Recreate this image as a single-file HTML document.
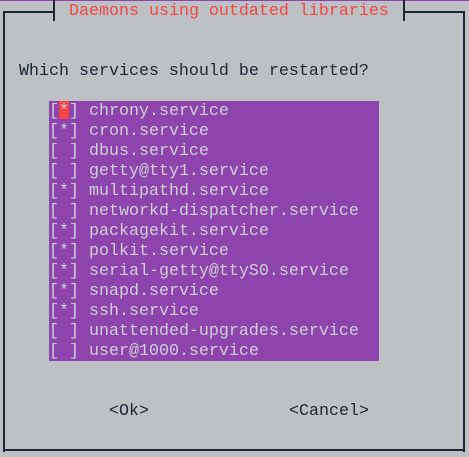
<!DOCTYPE html>
<html><head><meta charset="utf-8"><style>
html,body{margin:0;padding:0;}
body{width:469px;height:457px;background:#bdc1c4;position:relative;overflow:hidden;font-family:"Liberation Mono","DejaVu Sans Mono",monospace;font-size:16.67px;}
.a{position:absolute;white-space:pre;line-height:20px;}
.l{position:absolute;background:#1b2734;}
</style></head><body>
<div style="position:absolute;left:0;top:0;width:469px;height:1px;background:#8e44ad"></div>
<div class="l" style="left:3px;top:11px;width:52px;height:2px"></div>
<div class="l" style="left:53px;top:0;width:2px;height:21px"></div>
<div class="l" style="left:403px;top:0;width:2px;height:21px"></div>
<div class="l" style="left:403px;top:11px;width:62px;height:2px"></div>
<div class="l" style="left:3px;top:11px;width:2px;height:441px"></div>
<div class="l" style="left:463px;top:11px;width:2px;height:441px"></div>
<div class="l" style="left:3px;top:449px;width:462px;height:2px"></div>
<div class="a" style="left:69px;top:2px;color:#f24646">Daemons using outdated libraries</div>
<div class="a" style="left:19px;top:62px;color:#1b2734">Which services should be restarted?</div>
<div style="position:absolute;left:49px;top:101px;width:330px;height:260px;background:#8e44ad"></div>
<div style="position:absolute;left:59px;top:101px;width:10px;height:18px;background:#f24646"></div>
<div class="a" style="left:49px;top:102px;color:#cfcfd4">[*] chrony.service
[*] cron.service
[ ] dbus.service
[ ] getty@tty1.service
[*] multipathd.service
[ ] networkd-dispatcher.service
[*] packagekit.service
[*] polkit.service
[*] serial-getty@ttyS0.service
[*] snapd.service
[*] ssh.service
[ ] unattended-upgrades.service
[ ] user@1000.service</div>
<div class="a" style="left:109px;top:402px;color:#1b2734">&lt;Ok&gt;</div>
<div class="a" style="left:289px;top:402px;color:#1b2734">&lt;Cancel&gt;</div>
</body></html>
